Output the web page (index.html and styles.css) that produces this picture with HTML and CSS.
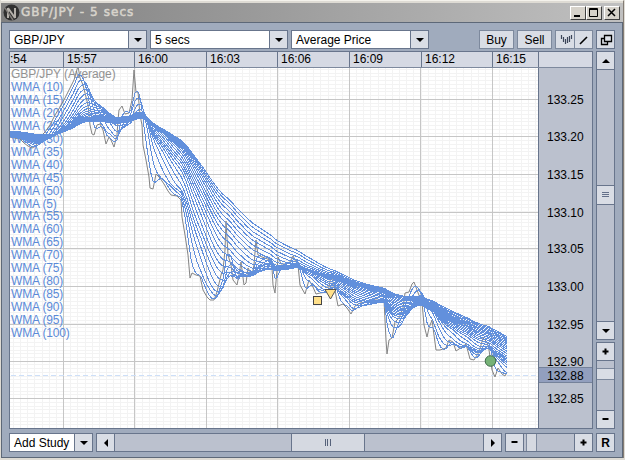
FILE: index.html
```
<!DOCTYPE html>
<html lang="en">
<head>
    <meta charset="UTF-8">
    <meta name="viewport" content="width=device-width, initial-scale=1.0">
    <title>GBP/JPY - 5 secs</title>
    <link rel="stylesheet" href="styles.css">
</head>
<body>

<div class="window">
    <div class="titlebar">
        <svg class="logo" width="17" height="17" viewBox="0 0 17 17">
            <circle cx="8.5" cy="8.5" r="8" fill="#303030"/>
            <path d="M5 4V14M5 4L12 14M12 4V14" fill="none" stroke="#b4b0aa" stroke-width="2"/>
            <path d="M2 4L10 16" stroke="#807c78" stroke-width="1.4"/>
        </svg>
        <h1>GBP/JPY - 5 secs</h1>
        <div class="controls">
            <span class="ctl"><svg width="14" height="12"><path d="M3 9H9" stroke="#000" stroke-width="2"/></svg></span>
            <span class="ctl"><svg width="14" height="12"><path d="M2.5 1.5H10.5V9.5H2.5ZM2 2.5H11" fill="none" stroke="#000"/></svg></span>
            <span class="ctl close"><svg width="14" height="12"><path d="M3 2L10 9M10 2L3 9" stroke="#000" stroke-width="1.5"/></svg></span>
        </div>
    </div>

    <div class="content">
        <div class="toolbar">
            <div class="combo"><span>GBP/JPY</span><i><b class="down"></b></i></div>
            <div class="combo"><span>5 secs</span><i><b class="down"></b></i></div>
            <div class="combo"><span>Average Price</span><i><b class="down"></b></i></div>
            <div class="buttons">
                <button class="btn">Buy</button>
                <button class="btn">Sell</button>
                <div class="tools">
                    <button><svg width="17" height="17"><path d="M4.5 4V8M6.5 6V11M8.5 8V13M10.5 6V12M12.5 5V11M14.5 4V8" stroke="#3c4558" stroke-width="1.2"/></svg></button>
                    <button><svg width="17" height="17"><path d="M5 13L12 6" stroke="#000" stroke-width="1.6"/></svg></button>
                </div>
                <button class="pop"><svg width="18" height="17"><path d="M7.5 4.5H14.5V10.5H7.5Z" fill="#dfe3ea" stroke="#000" stroke-width="1.3"/><path d="M7 7.5H4.5V13.5H10.5V11" fill="none" stroke="#000" stroke-width="1.3"/></svg></button>
            </div>
        </div>

        <div class="main">
            <div class="chart">
                <div class="times">
                    <span>:54</span><span>15:57</span><span>16:00</span><span>16:03</span><span>16:06</span><span>16:09</span><span>16:12</span><span>16:15</span><span></span>
                </div>
                <div class="plot-row">
                    <div class="plot">
                        <svg class="layer" id="grid" width="528" height="360" viewBox="10 68 528 360"></svg>
                        <ul class="layer legend" id="legend"><li class="price">GBP/JPY (Average)</li></ul>
                        <svg class="layer" id="curves" width="528" height="360" viewBox="10 68 528 360"></svg>
                    </div>
                    <svg class="axis" id="axis" width="54" height="360" viewBox="539 68 53 360">
                        <rect x="539" y="367" width="53" height="16" fill="#929fbe"/>
                        <path d="M539 367.5H592M539 382.5H592" stroke="#75829a"/>
                    </svg>
                </div>
            </div>
            <div class="side">
                <div class="vscroll">
                    <button class="arrow"><b class="up"></b></button>
                    <div class="track"><div class="thumb"><svg width="17" height="18"><path d="M5 6.5H12M5 8.5H12M5 10.5H12" stroke="#64708a"/></svg></div></div>
                    <button class="arrow"><b class="down"></b></button>
                </div>
                <div class="vzoom">
                    <button><svg width="7" height="7"><path d="M0.5 3.5H6.5M3.5 0.5V6.5" stroke="#000" stroke-width="2"/></svg></button>
                    <div class="track"><div class="thumb"></div></div>
                    <button><svg width="7" height="7"><path d="M0.5 3H6.5" stroke="#000" stroke-width="2"/></svg></button>
                </div>
            </div>
        </div>

        <div class="bottombar">
            <div class="combo study"><span>Add Study</span><i><b class="down"></b></i></div>
            <div class="hscroll">
                <button><b class="left"></b></button>
                <div class="track"><div class="thumb"><svg width="72" height="17"><path d="M33.5 5V12M35.5 5V12M38.5 5V12" stroke="#56627a"/></svg></div></div>
                <button><b class="right"></b></button>
            </div>
            <div class="hzoom">
                <button><svg width="7" height="7"><path d="M0.5 3H6.5" stroke="#000" stroke-width="2"/></svg></button>
                <div class="track"><div class="thumb"></div></div>
                <button><svg width="7" height="7"><path d="M0.5 3.5H6.5M3.5 0.5V6.5" stroke="#000" stroke-width="2"/></svg></button>
            </div>
            <button class="reset">R</button>
        </div>
    </div>
</div>

<script src="chart.js"></script>
</body>
</html>
```
FILE: styles.css
```
* {
    box-sizing: border-box;
}
body {
    margin: 0;
    width: 625px;
    height: 460px;
    overflow: hidden;
    background: #dedbd4;
    font-family: "Liberation Sans", Arial, sans-serif;
    font-size: 12px;
    color: #000;
}
.window {
    width: 623px;
    height: 458px;
    margin: 0 0 0 1px;
    padding-top: 2px;
    border-top: 1px solid #f4f2ec;
    border-right: 1px solid #847c74;
}
button {
    margin: 0;
    padding: 0;
    border: 0;
    background: #d9dde5;
    font-family: inherit;
    font-size: 12px;
    color: #000;
    display: flex;
    align-items: center;
    justify-content: center;
    flex: none;
}
svg {
    display: block;
    flex: none;
}

/* title bar */
.titlebar {
    display: flex;
    align-items: center;
    height: 19px;
    padding: 0 3px 0 2px;
    background: linear-gradient(90deg, #808080, #c0c0c0);
}
.titlebar h1 {
    margin: -2px 0 0 1px;
    flex: 1;
    font: normal 12px/18px "DejaVu Sans", sans-serif;
    letter-spacing: 1.05px;
    color: #d8d4cc;
    -webkit-text-stroke: 0.5px #d8d4cc;
}
.controls {
    display: flex;
}
.ctl {
    width: 16px;
    height: 14px;
    background: #d6d2ca;
    border: 1px solid;
    border-color: #fff #404040 #404040 #fff;
}
.close {
    margin-left: 2px;
}

.content {
    height: 436px;
    padding: 7px 6px 0 7px;
    border: 1px solid #5d6878;
    background: #a0abbd;
}

/* toolbar */
.toolbar {
    display: flex;
    gap: 3px;
    height: 19px;
}
.combo {
    display: flex;
    width: 138px;
    height: 19px;
    border: 1px solid #68758c;
    background: #fff;
}
.combo span {
    flex: 1;
    padding-left: 4px;
    line-height: 18px;
    white-space: nowrap;
}
.combo i {
    display: flex;
    align-items: center;
    justify-content: center;
    width: 18px;
    background: #d9dde5;
    border-left: 1px solid #68758c;
}
.up, .down, .left, .right {
    border: 4px solid transparent;
}
.down {
    border-top-color: #000;
    border-bottom-width: 0;
}
.up {
    border-bottom-color: #000;
    border-top-width: 0;
}
.left {
    border-right-color: #000;
    border-left-width: 0;
}
.right {
    border-left-color: #000;
    border-right-width: 0;
}
.buttons {
    display: flex;
    gap: 3px;
    margin-left: auto;
}
.btn {
    width: 35px;
    border: 1px solid #7d899d;
}
.tools {
    display: flex;
    width: 38px;
    border: 1px solid #7d899d;
}
.tools button {
    width: 18px;
}
.tools button + button {
    border-left: 1px solid #7d899d;
}
.pop {
    width: 19px;
    border: 1px solid #68758c;
}

/* all three rows end on the same right edge */
.toolbar, .main, .bottombar {
    width: 606px;
}

/* chart */
.main {
    display: flex;
    gap: 3px;
    height: 378px;
    margin-top: 2px;
}
.chart {
    flex: 1;
    border: 1px solid #68758c;
}
.times {
    display: grid;
    grid-template-columns: 53px 71px 72px 71px 72px 72px 71px 46px 1fr;
    height: 16px;
    background: #d5d9e3;
    border-bottom: 1px solid #7d899d;
    line-height: 15px;
}
.times span {
    padding-left: 3px;
    border-left: 1px solid #68758c;
}
.times span:first-child {
    padding-left: 0;
    border-left: 0;
}
.plot-row {
    display: flex;
    height: 360px;
}
.plot {
    position: relative;
    width: 528px;
    background: #fff;
}
/* grid, legend and curves are stacked on the same area */
.layer {
    position: absolute;
    top: 0;
    left: 0;
}
.legend {
    margin: 0;
    padding: 0 0 0 1px;
    list-style: none;
    line-height: 12.95px;
    letter-spacing: -0.15px;
    color: #5b8ad8;
    white-space: nowrap;
}
.legend .price {
    letter-spacing: -0.1px;
    color: #929292;
}
.axis {
    width: 54px;
    border-left: 1px solid #68758c;
    background: #bbc1ce;
}
.axis text {
    font-size: 12px;
}

/* right hand sliders */
.side {
    width: 19px;
}
.side button, .side .thumb {
    width: 17px;
    background: #d9dde5;
}
.track {
    background: #bbc1ce;
}
.vscroll {
    display: flex;
    flex-direction: column;
    height: 289px;
    border: 1px solid #68758c;
}
.vscroll button {
    height: 17px;
}
.vscroll .track, .vzoom .track {
    flex: 1;
    border: solid #68758c;
    border-width: 1px 0;
}
.vscroll .thumb {
    height: 20px;
    margin-top: 115px;
    border: solid #68758c;
    border-width: 1px 0;
}
.vzoom {
    display: flex;
    flex-direction: column;
    height: 87px;
    margin-top: 2px;
    border: 1px solid #68758c;
}
.vzoom button, .hzoom button {
    height: 17px;
}
.vzoom .thumb {
    height: 12px;
    margin-top: 7px;
    border: solid #7d899d;
    border-width: 1px 0;
}

/* bottom bar */
.bottombar {
    display: flex;
    gap: 3px;
    height: 19px;
    margin-top: 4px;
}
.study {
    width: 84px;
}
.hscroll, .hzoom {
    display: flex;
    border: 1px solid #68758c;
}
.hscroll {
    flex: 1;
}
.hzoom {
    width: 88px;
}
.hscroll button, .hzoom button {
    width: 17px;
}
.bottombar .track {
    flex: 1;
    border: solid #68758c;
    border-width: 0 1px;
}
.hscroll .thumb {
    width: 74px;
    height: 17px;
    margin-left: 176px;
    background: #d5d9e1;
    border: solid #68758c;
    border-width: 0 1px;
}
.hzoom .thumb {
    width: 11px;
    height: 17px;
    margin-left: 2px;
    background: #d5d9e1;
    border: solid #7d899d;
    border-width: 0 1px;
}
.reset {
    width: 19px;
    border: 1px solid #68758c;
    font-weight: bold;
}
```
FILE: chart.js
```
const grid = document.getElementById('grid');
const curves = document.getElementById('curves');
const axis = document.getElementById('axis');
const legend = document.getElementById('legend');

// average price as x,y pairs in chart pixels
const price = [
    [-200,121],[-100,128],[-30,132],[0,136],[9,137],[20,139],[24,143],[28,146],[32,148],[36,146],[40,137],[45,132],
    [50,125],[55,115],[60,107],[65,98],[70,88],[74,80],[78,66],[80,78],[83,85],[86,97],[88,105],
    [90,125],[92,134],[94,135],[97,125],[100,124],[103,130],[106,144],[109,137],[111,140],[114,147],
    [117,135],[118,120],[119,110],[122,106],[125,114],[129,113],[132,100],[134,70],[136,92],[138,92],
    [140,115],[142,125],[143,145],[146,160],[149,177],[150,188],[153,189],[156,174],[160,178],[164,184],
    [168,191],[171,195],[177,196],[181,200],[182,217],[185,235],[188,255],[190,278],[192,273],[196,275],
    [200,276],[203,290],[207,297],[210,300],[214,300],[217,292],[221,275],[223,270],[225,250],[226,221],
    [228,255],[231,265],[233,280],[237,285],[239,275],[241,262],[242,270],[244,285],[246,283],[248,268],
    [252,275],[254,265],[256,240],[258,255],[262,257],[265,258],[270,260],[272,268],[273,285],[275,293],
    [277,270],[278,257],[281,264],[286,264],[290,262],[293,256],[296,262],[298,265],[300,285],[305,294],
    [309,280],[313,287],[316,294],[320,293],[328,292],[331,276],[334,285],[338,306],[343,304],
    [347,308],[351,314],[355,306],[360,303],[366,302],[374,300],[384,300],[386,340],[387,354],[389,340],
    [392,338],[395,322],[399,318],[403,308],[405,293],[409,292],[412,284],[414,282],[417,290],[420,298],
    [422,302],[424,325],[427,337],[429,328],[432,320],[434,335],[436,350],[440,350],[446,348],[449,340],
    [453,342],[456,351],[462,347],[466,344],[470,359],[474,360],[479,352],[483,338],[487,342],[489,350],
    [492,370],[495,377],[498,368],[502,374],[505,376],[507,372]
];

function add(parent, tag, attrs) {
    const el = document.createElementNS('http://www.w3.org/2000/svg', tag);
    for (const key in attrs) el.setAttribute(key, attrs[key]);
    parent.appendChild(el);
    return el;
}

function priceAt(x) {
    for (let i = 1; i < price.length; i++) {
        const [x0, y0] = price[i - 1];
        const [x1, y1] = price[i];
        if (x <= x1) return y0 + (y1 - y0) * (x - x0) / (x1 - x0);
    }
    return price[price.length - 1][1];
}

// grid
let minor = '';
for (let x = 13; x < 538; x += 7.15) minor += `M${Math.round(x) + 0.5} 68V428`;
for (let y = 69; y < 428; y += 3.74) minor += `M10 ${Math.round(y) + 0.5}H538`;
add(grid, 'path', { d: minor, stroke: '#f3f3f3' });

let major = '';
[63, 134, 206, 277, 349, 420, 492].forEach(x => major += `M${x + 0.5} 68V428`);
[99, 136, 174, 212, 248, 286, 324, 361, 398].forEach((y, i) => {
    major += `M10 ${y + 0.5}H538`;
    add(axis, 'text', { x: 547, y: y + 5 }).textContent = (133.25 - i * 0.05).toFixed(2);
});
add(axis, 'text', { x: 547, y: 380 }).textContent = '132.88';
add(grid, 'path', { d: major, stroke: '#c6c6c6' });
add(grid, 'path', { d: 'M11 375.5H538', stroke: '#cddff8', 'stroke-dasharray': '5 3' });

// price line, then one weighted average per period
add(curves, 'polyline', { points: price.join(' '), fill: 'none', stroke: '#848484' });

for (let period = 5; period <= 100; period += 5) {
    const points = [];
    for (let x = 9; x <= 507; x += 2) {
        let sum = 0;
        for (let k = 0; k < period; k++) sum += priceAt(x - k * 2) * (period - k);
        points.push([x, (sum / (period * (period + 1) / 2)).toFixed(2)]);
    }
    add(curves, 'polyline', { points: points.join(' '), fill: 'none', stroke: '#6290dc', 'shape-rendering': 'crispEdges' });
}

// trade markers
add(curves, 'rect', { x: 313.5, y: 296.5, width: 8, height: 8, fill: '#ffe08a', stroke: '#444' });
add(curves, 'path', { d: 'M325 289.5H336L330.5 299Z', fill: '#ffe08a', stroke: '#555' });
add(curves, 'circle', { cx: 490.5, cy: 361, r: 5.3, fill: '#76b276', stroke: '#3f6b4b' });

[10, 15, 20, 25, 30, 35, 40, 45, 50, 5, 55, 60, 65, 70, 75, 80, 85, 90, 95, 100].forEach(n => {
    const li = document.createElement('li');
    li.textContent = `WMA (${n})`;
    legend.appendChild(li);
});
```
